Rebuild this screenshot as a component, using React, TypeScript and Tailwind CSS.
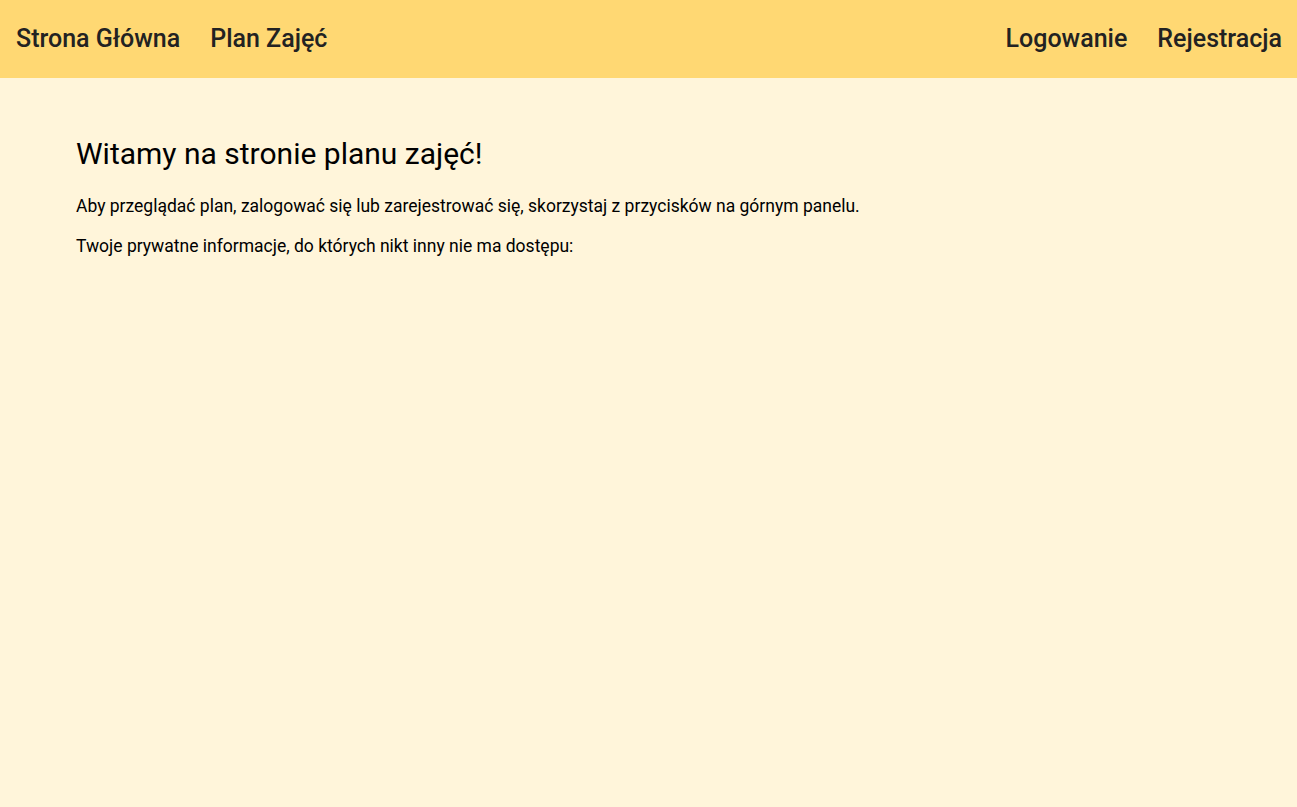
export default function App() {
  return (
    <div className="min-h-[807px] bg-[#fff5da] font-['Roboto',sans-serif]">
      <nav className="h-[78px] bg-[#ffd873] flex items-center justify-between px-4 text-[#222] font-medium text-[25px]">
        <div className="flex gap-[30px]">
          <span>Strona Główna</span>
          <span>Plan Zajęć</span>
        </div>
        <div className="flex gap-[30px] mr-[-1px]">
          <span>Logowanie</span>
          <span>Rejestracja</span>
        </div>
      </nav>
      <main className="px-[76px] pt-[58px] text-black">
        <h1 className="text-[30px] leading-[36px] mb-[22px]">Witamy na stronie planu zajęć!</h1>
        <p className="text-[17.5px] leading-[24px] mb-[16px]">Aby przeglądać plan, zalogować się lub zarejestrować się, skorzystaj z przycisków na górnym panelu.</p>
        <p className="text-[17.5px] leading-[24px]">Twoje prywatne informacje, do których nikt inny nie ma dostępu:</p>
      </main>
    </div>
  );
}
